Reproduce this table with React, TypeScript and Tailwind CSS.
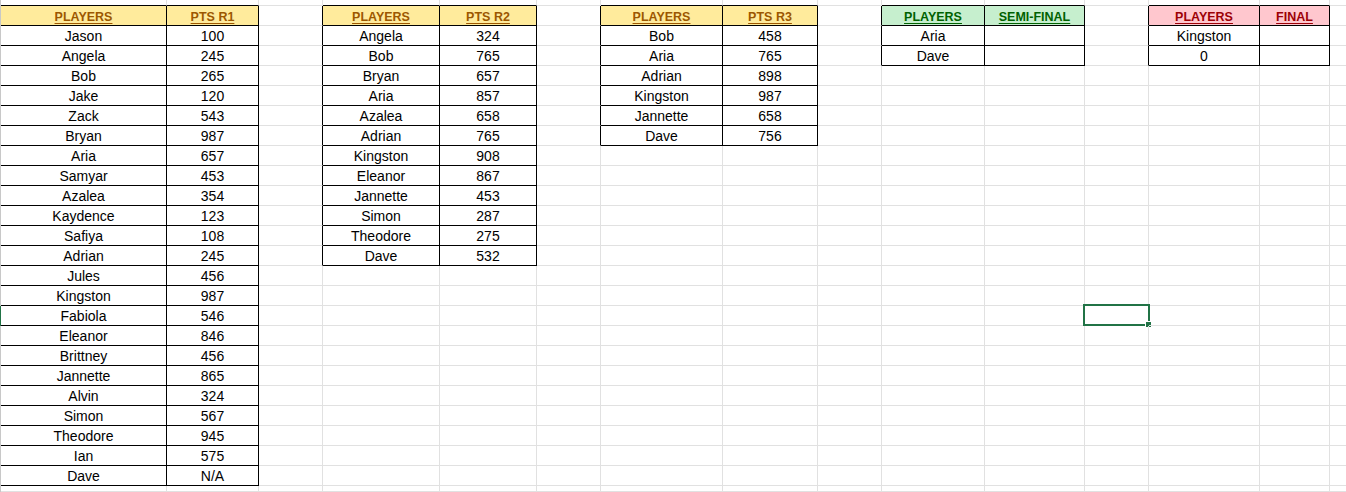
import React from "react";

type Tbl = {
  col: number;
  headers: [string, string];
  rows: [string, string][];
  theme: "y" | "g" | "r";
};

const tables: Tbl[] = [
  {
    col: 0,
    headers: ["PLAYERS", "PTS R1"],
    theme: "y",
    rows: [
      ["Jason", "100"],
      ["Angela", "245"],
      ["Bob", "265"],
      ["Jake", "120"],
      ["Zack", "543"],
      ["Bryan", "987"],
      ["Aria", "657"],
      ["Samyar", "453"],
      ["Azalea", "354"],
      ["Kaydence", "123"],
      ["Safiya", "108"],
      ["Adrian", "245"],
      ["Jules", "456"],
      ["Kingston", "987"],
      ["Fabiola", "546"],
      ["Eleanor", "846"],
      ["Brittney", "456"],
      ["Jannette", "865"],
      ["Alvin", "324"],
      ["Simon", "567"],
      ["Theodore", "945"],
      ["Ian", "575"],
      ["Dave", "N/A"],
    ],
  },
  {
    col: 3,
    headers: ["PLAYERS", "PTS R2"],
    theme: "y",
    rows: [
      ["Angela", "324"],
      ["Bob", "765"],
      ["Bryan", "657"],
      ["Aria", "857"],
      ["Azalea", "658"],
      ["Adrian", "765"],
      ["Kingston", "908"],
      ["Eleanor", "867"],
      ["Jannette", "453"],
      ["Simon", "287"],
      ["Theodore", "275"],
      ["Dave", "532"],
    ],
  },
  {
    col: 6,
    headers: ["PLAYERS", "PTS R3"],
    theme: "y",
    rows: [
      ["Bob", "458"],
      ["Aria", "765"],
      ["Adrian", "898"],
      ["Kingston", "987"],
      ["Jannette", "658"],
      ["Dave", "756"],
    ],
  },
  {
    col: 9,
    headers: ["PLAYERS", "SEMI-FINAL"],
    theme: "g",
    rows: [
      ["Aria", ""],
      ["Dave", ""],
    ],
  },
  {
    col: 12,
    headers: ["PLAYERS", "FINAL"],
    theme: "r",
    rows: [
      ["Kingston", ""],
      ["0", ""],
    ],
  },
];

const colW = [
  "w-[166px]",
  "w-[92px]",
  "w-[64px]",
  "w-[117px]",
  "w-[97px]",
  "w-[64px]",
  "w-[122px]",
  "w-[95px]",
  "w-[64px]",
  "w-[103px]",
  "w-[100px]",
  "w-[64px]",
  "w-[111px]",
  "w-[70px]",
  "w-[64px]",
];

const NROWS = 26; // 0 top partial, 1 header, 2..24 data, 25 bottom partial
const SEL_ROW = 16;
const SEL_COL = 11;

type CellInfo = { text: string; header: boolean; theme?: "y" | "g" | "r" } | null;

function cellAt(r: number, c: number): CellInfo {
  for (const t of tables) {
    if (c === t.col || c === t.col + 1) {
      const k = c - t.col;
      if (r === 1) return { text: t.headers[k], header: true, theme: t.theme };
      const i = r - 2;
      if (i >= 0 && i < t.rows.length) return { text: t.rows[i][k], header: false, theme: t.theme };
    }
  }
  return null;
}

const fillCls = { y: "bg-[#ffeb9c]", g: "bg-[#c6efce]", r: "bg-[#ffc7ce]" };
const txtCls = { y: "text-[#9c5700]", g: "text-[#006100]", r: "text-[#9c0006]" };

export default function App() {
  return (
    <div
      className="w-[1346px] h-[492px] overflow-hidden bg-white"
      style={{ fontFamily: '"Liberation Sans", Arial, sans-serif' }}
    >
      {Array.from({ length: NROWS }).map((_, r) => {
        const h = r === 0 || r === NROWS - 1 ? "h-[6px]" : "h-[20px]";
        return (
          <div key={r} className={`flex ${h}`}>
            <div className={`w-[1px] shrink-0 ${r === SEL_ROW ? "bg-[#217346]" : "bg-[#c8c8c8]"}`} />
            {colW.map((w, c) => {
              const info = cellAt(r, c);
              const rightBlack = !!info || !!cellAt(r, c + 1);
              const bottomBlack = !!info || !!cellAt(r + 1, c);
              const rb = rightBlack ? "border-r-black" : "border-r-[#e1e1e1]";
              const bb = bottomBlack ? "border-b-black" : "border-b-[#e1e1e1]";
              const bg = info && info.header && info.theme ? fillCls[info.theme] : "";
              return (
                <div
                  key={c}
                  className={`relative shrink-0 ${w} h-full border-r border-b ${rb} ${bb} ${bg} flex items-end justify-center pb-[1px]`}
                >
                  {info && info.text !== "" && (
                    info.header ? (
                      <span
                        className={`text-[12.5px] font-bold underline underline-offset-[2px] leading-[normal] whitespace-nowrap ${txtCls[info.theme!]}`}
                      >
                        {info.text}
                      </span>
                    ) : (
                      <span className="text-[14px] leading-[normal] text-black whitespace-nowrap">{info.text}</span>
                    )
                  )}
                  {r === SEL_ROW && c === SEL_COL && (
                    <>
                      <div className="absolute left-[-2px] top-[-2px] w-[67px] h-[22px] border-2 border-[#217346]" />
                      <div className="absolute left-[60px] top-[15px] w-[7px] h-[7px] bg-[#217346] border border-white" />
                    </>
                  )}
                </div>
              );
            })}
          </div>
        );
      })}
    </div>
  );
}
